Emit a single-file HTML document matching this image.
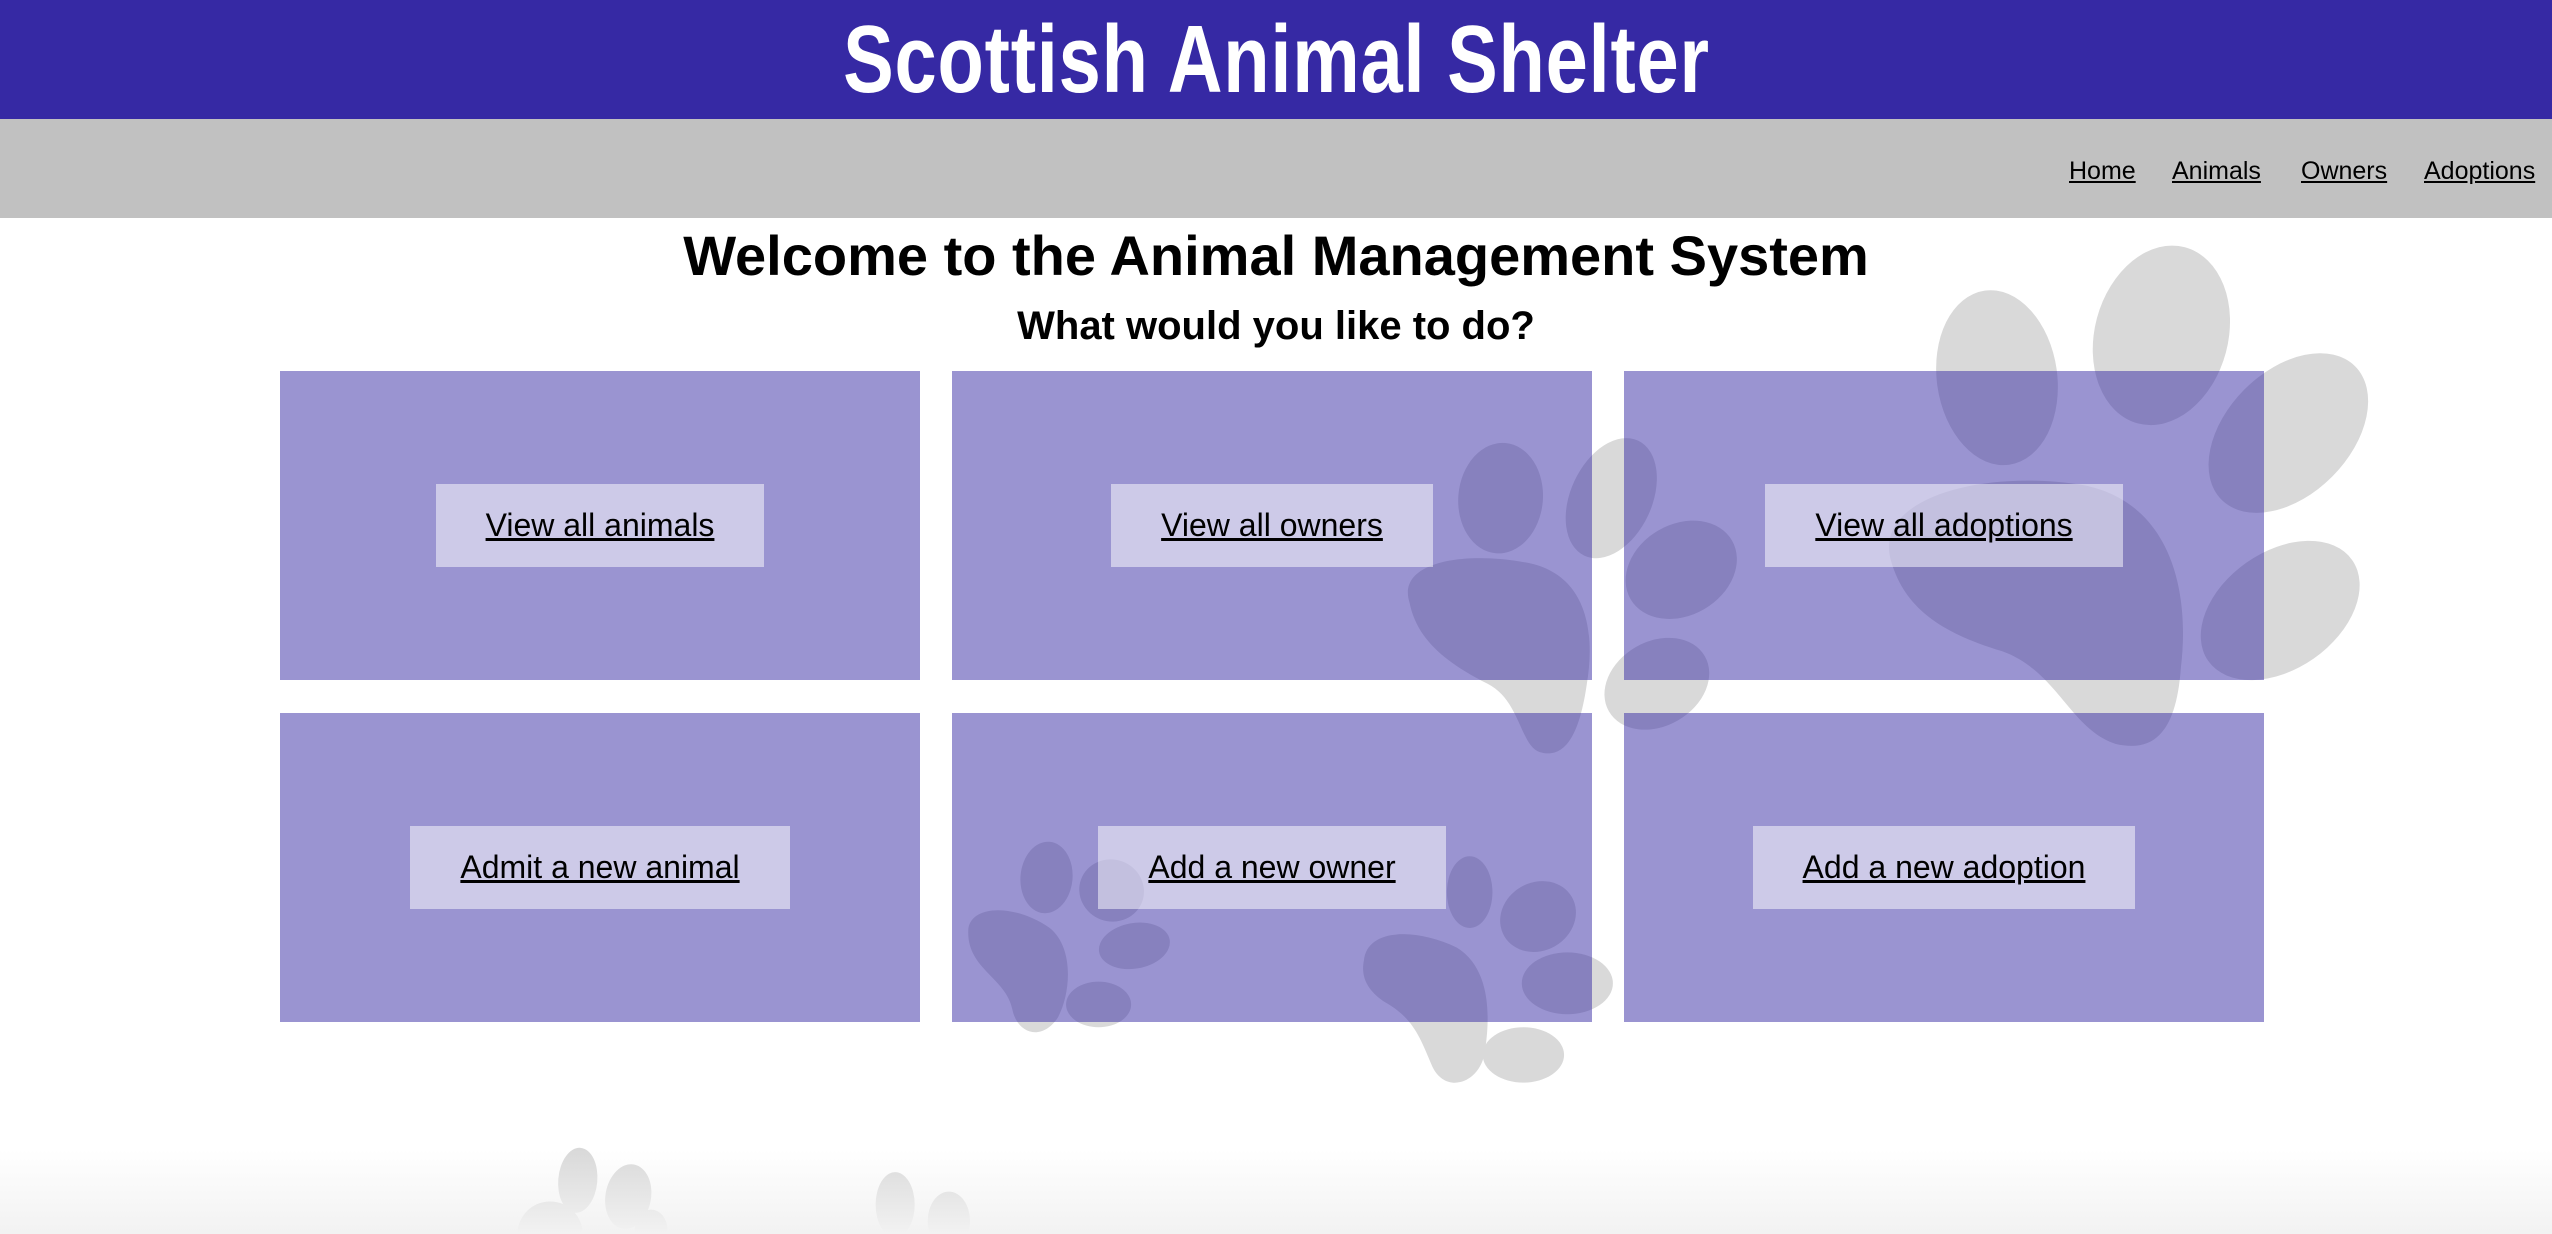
<!DOCTYPE html>
<html><head><meta charset="utf-8"><style>
html,body{margin:0;padding:0;width:2552px;height:1234px;overflow:hidden;background:#fff;font-family:"Liberation Sans",sans-serif;}
#hdr{position:absolute;left:0;top:0;width:2552px;height:119px;background:#3629a4;text-align:center;}
#hdr span{display:inline-block;color:#fff;font-weight:bold;font-size:96px;line-height:119px;transform:scaleX(0.79);letter-spacing:1px;white-space:nowrap;}
#nav{position:absolute;left:0;top:119px;width:2552px;height:99px;background:#c1c1c1;}
.nl{position:absolute;top:157px;color:#000;font-size:25px;text-decoration:underline;}
#bg{position:absolute;left:0;top:0;}
h1{position:absolute;left:0;width:2552px;top:221px;margin:0;text-align:center;font-size:56px;line-height:70px;font-weight:bold;}
h2{position:absolute;left:0;width:2552px;top:301px;margin:0;text-align:center;font-size:40px;line-height:50px;font-weight:bold;}
.card{position:absolute;width:640px;height:309px;background:rgba(54,41,164,0.5);display:flex;align-items:center;justify-content:center;}
.card a{display:block;height:83px;line-height:83px;padding:0 50px;background:rgba(255,255,255,0.5);color:#000;font-size:32px;text-decoration:underline;white-space:nowrap;}
#shade{position:absolute;left:0;top:1150px;width:2552px;height:84px;background:linear-gradient(#ffffff00,#f2f2f2);}
</style></head><body>
<svg id="bg" width="2552" height="1234" viewBox="0 0 1568 758" preserveAspectRatio="none">
<g fill="#d9d9d9">
<ellipse cx="1227" cy="232" rx="37" ry="54" transform="rotate(-8 1227 232)"/>
<ellipse cx="1328" cy="206" rx="41" ry="56" transform="rotate(15 1328 206)"/>
<ellipse cx="1406" cy="266" rx="38" ry="58" transform="rotate(45 1406 266)"/>
<ellipse cx="1401" cy="375" rx="36" ry="54" transform="rotate(55 1401 375)"/>
<path d="M1162,345 C1150,305 1220,288 1280,298 C1332,308 1346,360 1340,410 C1337,452 1322,462 1300,457 C1272,448 1264,412 1230,400 C1190,388 1170,372 1162,345 Z"/>
<ellipse cx="922" cy="306" rx="26" ry="34" transform="rotate(5 922 306)"/>
<ellipse cx="990" cy="306" rx="25" ry="39" transform="rotate(25 990 306)"/>
<ellipse cx="1033" cy="350" rx="36" ry="28" transform="rotate(-30 1033 350)"/>
<ellipse cx="1018" cy="420" rx="34" ry="26" transform="rotate(-30 1018 420)"/>
<path d="M866,370 C858,345 900,338 940,346 C976,354 980,390 975,420 C970,455 960,466 946,462 C934,458 934,430 914,420 C884,405 870,390 866,370 Z"/>
<ellipse cx="643" cy="539" rx="16" ry="22" transform="rotate(5 643 539)"/>
<ellipse cx="683" cy="547" rx="20" ry="19" transform="rotate(20 683 547)"/>
<ellipse cx="697" cy="581" rx="22" ry="14" transform="rotate(-10 697 581)"/>
<ellipse cx="675" cy="617" rx="20" ry="14"/>
<path d="M595,570 C598,555 625,556 645,570 C660,582 658,610 650,625 C640,640 625,635 622,620 C618,600 593,595 595,570 Z"/>
<ellipse cx="903" cy="548" rx="14" ry="22"/>
<ellipse cx="945" cy="563" rx="24" ry="21" transform="rotate(-30 945 563)"/>
<ellipse cx="963" cy="604" rx="28" ry="19"/>
<ellipse cx="936" cy="648" rx="25" ry="17"/>
<path d="M838,590 C840,570 870,570 895,582 C918,596 915,630 912,648 C908,666 888,672 880,655 C872,636 868,625 850,615 C840,608 836,600 838,590 Z"/>
<ellipse cx="355" cy="725" rx="12" ry="20" transform="rotate(5 355 725)"/>
<ellipse cx="386" cy="735" rx="14" ry="20" transform="rotate(10 386 735)"/>
<ellipse cx="338" cy="758" rx="20" ry="20"/>
<ellipse cx="400" cy="755" rx="10" ry="12"/>
<ellipse cx="550" cy="740" rx="12" ry="20"/>
<ellipse cx="583" cy="750" rx="13" ry="18"/>
</g></svg>
<div id="shade"></div>
<div id="hdr"><span>Scottish Animal Shelter</span></div>
<div id="nav"></div>
<a class="nl" style="left:2069px;">Home</a>
<a class="nl" style="left:2172px;">Animals</a>
<a class="nl" style="left:2301px;">Owners</a>
<a class="nl" style="left:2424px;">Adoptions</a>
<h1>Welcome to the Animal Management System</h1>
<h2>What would you like to do?</h2>
<div class="card" style="left:280px;top:371px"><a>View all animals</a></div>
<div class="card" style="left:952px;top:371px"><a>View all owners</a></div>
<div class="card" style="left:1624px;top:371px"><a>View all adoptions</a></div>
<div class="card" style="left:280px;top:713px"><a>Admit a new animal</a></div>
<div class="card" style="left:952px;top:713px"><a>Add a new owner</a></div>
<div class="card" style="left:1624px;top:713px"><a>Add a new adoption</a></div>
</body></html>
